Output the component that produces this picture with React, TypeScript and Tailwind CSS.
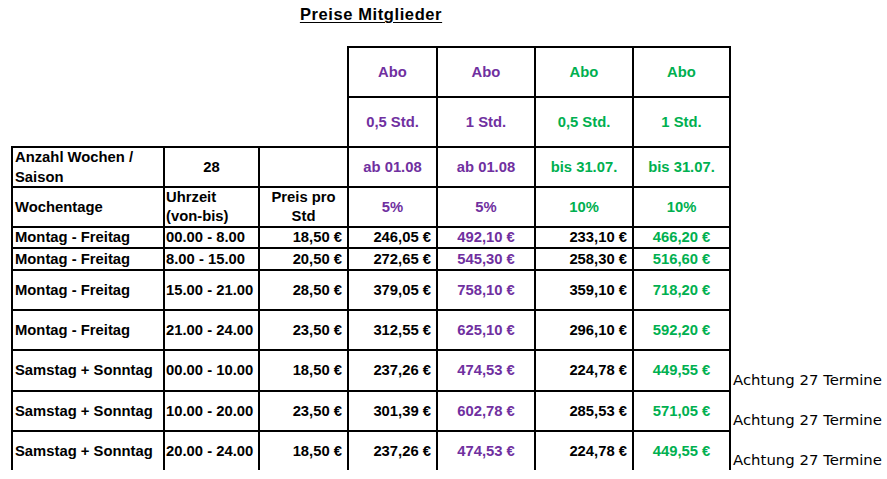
import type { ReactNode } from "react";

const PURPLE = "text-[#7030a0]";
const GREEN = "text-[#00b050]";

type Row = {
  day: string;
  time: string;
  price: string;
  a: string;
  b: string;
  c: string;
  d: string;
  note?: string;
};

const rows: Row[] = [
  { day: "Montag - Freitag", time: "00.00 - 8.00", price: "18,50 €", a: "246,05 €", b: "492,10 €", c: "233,10 €", d: "466,20 €" },
  { day: "Montag - Freitag", time: "8.00 - 15.00", price: "20,50 €", a: "272,65 €", b: "545,30 €", c: "258,30 €", d: "516,60 €" },
  { day: "Montag - Freitag", time: "15.00 - 21.00", price: "28,50 €", a: "379,05 €", b: "758,10 €", c: "359,10 €", d: "718,20 €" },
  { day: "Montag - Freitag", time: "21.00 - 24.00", price: "23,50 €", a: "312,55 €", b: "625,10 €", c: "296,10 €", d: "592,20 €" },
  { day: "Samstag + Sonntag", time: "00.00 - 10.00", price: "18,50 €", a: "237,26 €", b: "474,53 €", c: "224,78 €", d: "449,55 €", note: "Achtung 27 Termine" },
  { day: "Samstag + Sonntag", time: "10.00 - 20.00", price: "23,50 €", a: "301,39 €", b: "602,78 €", c: "285,53 €", d: "571,05 €", note: "Achtung 27 Termine" },
  { day: "Samstag + Sonntag", time: "20.00 - 24.00", price: "18,50 €", a: "237,26 €", b: "474,53 €", c: "224,78 €", d: "449,55 €", note: "Achtung 27 Termine" },
];

const Cell = ({
  children,
  className = "",
}: {
  children?: ReactNode;
  className?: string;
}) => (
  <div className={`flex items-center border-l-2 border-t-2 border-black whitespace-nowrap ${className}`}>
    {children}
  </div>
);

const Note = ({ children }: { children?: ReactNode }) => (
  <div className="flex items-end pl-[2px] font-['DejaVu_Sans',sans-serif] text-[14.9px] font-normal leading-[20px] text-black whitespace-nowrap">
    {children}
  </div>
);

export default function App() {
  return (
    <div className="h-[479px] w-[887px] overflow-hidden bg-white font-['Liberation_Sans',Arial,sans-serif] text-[14.8px] font-bold text-black">
      <div className="ml-[11px] h-[46px] w-[720px] pt-[4px] text-center">
        <span className="text-[16.5px] leading-[20px] tracking-[0.6px] underline decoration-1 underline-offset-2">
          Preise Mitglieder
        </span>
      </div>

      <div className="ml-[11px] grid grid-cols-[152px_95px_89px_89px_98px_98px_99px_auto] grid-rows-[50px_50px_40px_40px_21px_22px_40px_40px_41px_40px_40px] leading-[19px]">
        {/* empty corner */}
        <div className="col-span-3 row-span-2" />

        <Cell className={`justify-center ${PURPLE}`}>Abo</Cell>
        <Cell className={`justify-center ${PURPLE}`}>Abo</Cell>
        <Cell className={`justify-center ${GREEN}`}>Abo</Cell>
        <Cell className={`justify-center border-r-2 ${GREEN}`}>Abo</Cell>
        <div />

        <Cell className={`justify-center ${PURPLE}`}>0,5 Std.</Cell>
        <Cell className={`justify-center ${PURPLE}`}>1 Std.</Cell>
        <Cell className={`justify-center ${GREEN}`}>0,5 Std.</Cell>
        <Cell className={`justify-center border-r-2 ${GREEN}`}>1 Std.</Cell>
        <div />

        <Cell className="pl-[2px] leading-[20px]">
          <span>
            Anzahl Wochen /<br />
            Saison
          </span>
        </Cell>
        <Cell className="justify-center">28</Cell>
        <Cell />
        <Cell className={`justify-center ${PURPLE}`}>ab 01.08</Cell>
        <Cell className={`justify-center ${PURPLE}`}>ab 01.08</Cell>
        <Cell className={`justify-center ${GREEN}`}>bis 31.07.</Cell>
        <Cell className={`justify-center border-r-2 ${GREEN}`}>bis 31.07.</Cell>
        <div />

        <Cell className="pl-[2px]">Wochentage</Cell>
        <Cell className="pl-[1px]">
          <span>
            Uhrzeit
            <br />
            (von-bis)
          </span>
        </Cell>
        <Cell className="justify-center text-center">
          <span>
            Preis pro
            <br />
            Std
          </span>
        </Cell>
        <Cell className={`justify-center ${PURPLE}`}>5%</Cell>
        <Cell className={`justify-center ${PURPLE}`}>5%</Cell>
        <Cell className={`justify-center ${GREEN}`}>10%</Cell>
        <Cell className={`justify-center border-r-2 ${GREEN}`}>10%</Cell>
        <div />

        {rows.map((r, i) => (
          <div key={i} className="contents">
            <Cell className="pl-[2px]">{r.day}</Cell>
            <Cell className="pl-[1px]">{r.time}</Cell>
            <Cell className="justify-end pr-[5px]">{r.price}</Cell>
            <Cell className="justify-end pr-[5px]">{r.a}</Cell>
            <Cell className={`justify-center ${PURPLE}`}>{r.b}</Cell>
            <Cell className="justify-end pr-[5px]">{r.c}</Cell>
            <Cell className={`justify-center border-r-2 ${GREEN}`}>{r.d}</Cell>
            <Note>{r.note}</Note>
          </div>
        ))}
      </div>
    </div>
  );
}
